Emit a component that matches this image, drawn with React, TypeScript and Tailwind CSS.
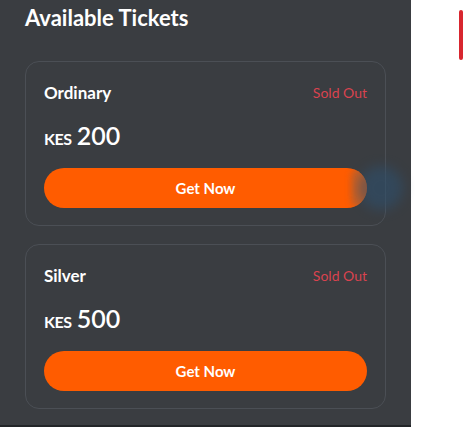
const tickets = [
  { name: 'Ordinary', price: 200, pressed: true },
  { name: 'Silver', price: 500, pressed: false },
];

function TicketCard({ name, price, pressed }: { name: string; price: number; pressed: boolean }) {
  return (
    <div className="rounded-[14px] border border-[#4b4f55] px-[18px] pt-[19px] pb-[17px]">
      <div className="flex items-center justify-between">
        <span className="text-[17px] font-bold leading-6 text-white">{name}</span>
        <span className="text-[14px] leading-5 text-[#d9434f]">Sold Out</span>
      </div>
      <div className="mt-[16px] flex items-baseline gap-[5px] text-white">
        <span className="text-[16px] font-bold tracking-tight">KES</span>
        <span className="text-[25px] font-semibold leading-7">{price}</span>
      </div>
      <div className="relative mt-[17px]">
        <button className="relative h-10 w-full overflow-hidden rounded-full bg-[#ff5c00] text-[15px] font-bold text-white">
          Get Now
          {pressed && (
            <span className="absolute right-0 top-0 h-10 w-4 rounded-full bg-[#b8602e] opacity-80 blur-[3px]" />
          )}
        </button>
        {pressed && (
          <span className="absolute -right-[36px] top-[-2px] h-11 w-11 rounded-full bg-[#2e4f6c] opacity-60 blur-[6px]" />
        )}
      </div>
    </div>
  );
}

export default function App() {
  return (
    <div className="flex h-[428px] w-[464px] bg-white font-['Lato',sans-serif]">
      <div className="h-[427px] w-[411px] border-b-2 border-[#222528] bg-[#3a3d41] px-[25px] pt-[4px]">
        <h2 className="text-[22px] font-bold leading-7 text-white">Available Tickets</h2>
        <div className="mt-[29px] flex flex-col gap-[18px]">
          {tickets.map((t) => (
            <TicketCard key={t.name} {...t} />
          ))}
        </div>
      </div>
      <div className="ml-[48px] mt-[10px] h-[50px] w-[4px] rounded-full bg-[#d8262f]" />
    </div>
  );
}
